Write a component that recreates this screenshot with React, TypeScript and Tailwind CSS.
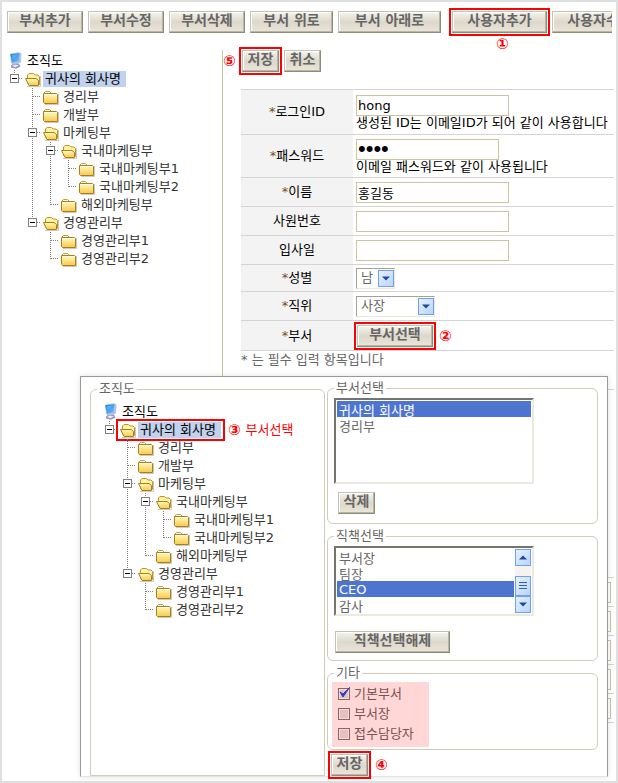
import { useState } from "react"
import type { ReactNode } from "react"
import clsx from "clsx"

type TreeRow = {
  label: string
  // which ancestor columns still carry a vertical line
  guides: boolean[]
  open?: boolean
  last?: boolean
}

const rows: TreeRow[] = [
  { label: "귀사의 회사명", guides: [], open: true, last: true },
  { label: "경리부", guides: [false] },
  { label: "개발부", guides: [false] },
  { label: "마케팅부", guides: [false], open: true },
  { label: "국내마케팅부", guides: [false, true], open: true },
  { label: "국내마케팅부1", guides: [false, true, true] },
  { label: "국내마케팅부2", guides: [false, true, true], last: true },
  { label: "해외마케팅부", guides: [false, true], last: true },
  { label: "경영관리부", guides: [false], open: true, last: true },
  { label: "경영관리부1", guides: [false, false] },
  { label: "경영관리부2", guides: [false, false], last: true },
]

function Defs() {
  return (
    <svg width="0" height="0" className="absolute" aria-hidden="true">
      <defs>
        <linearGradient id="folder" x1="0" y1="0" x2="0" y2="1">
          <stop offset="0" stopColor="#fffbc0" />
          <stop offset="1" stopColor="#f7c94c" />
        </linearGradient>
        <linearGradient id="screen" x1="0" y1="0" x2="1" y2="1">
          <stop offset="0" stopColor="#1f7fe0" />
          <stop offset="1" stopColor="#6cc4fb" />
        </linearGradient>
        <linearGradient id="arrowBox" x1="0" y1="0" x2="1" y2="1">
          <stop offset="0" stopColor="#e8f1ff" />
          <stop offset="1" stopColor="#b9d3fb" />
        </linearGradient>
      </defs>
    </svg>
  )
}

function Computer() {
  return (
    <svg width="18" height="18" viewBox="0 0 18 18" className="shrink-0" aria-hidden="true">
      <path d="M6 13.5 L9 11 L14 11.5 L15.5 14.5 L11 16.8 L6 15.5 Z" fill="#8f97bd" />
      <path d="M7 14 L10 12.5 L14 13.2 L10.5 15.3 Z" fill="#e9ebf5" />
      <path d="M5 1.8 L14 0.3 L16.5 1.5 L16 10.5 L8 12.5 L6 11 Z" fill="#b7c2e2" />
      <path d="M5.3 2.2 L14.4 0.9 L13.8 9.2 L7 10.8 Z" fill="url(#screen)" />
      <path d="M7 3.2 L13 2.4 L7.8 7.4 Z" fill="#5fb4f5" opacity="0.8" />
    </svg>
  )
}

function Folder({ open }: { open?: boolean }) {
  return (
    <svg width="18" height="18" viewBox="0 0 18 18" className="shrink-0" aria-hidden="true">
      <path d="M4 16.5 H17.5 V6" fill="none" stroke="#c9c9c9" />
      {open ? (
        <>
          <path d="M4.5 13 V5 L6 3.5 H10.5 L12 5 H15 L16.5 6.5 V14.5 H6 Z" fill="#fff3a6" stroke="#c0932a" />
          <path d="M2.5 8.5 H13 L15.5 10.5 V15.5 H6 Z" fill="url(#folder)" stroke="#b07d12" />
        </>
      ) : (
        <>
          <path d="M3 5 L4.5 3.5 H8.5 L10 5" fill="#fff" stroke="#c79b35" />
          <path d="M2.5 5.5 H15.5 L16.5 6.5 V15.5 H3.5 L2.5 14.5 Z" fill="url(#folder)" stroke="#b07d12" />
          <path d="M3.5 6.5 H15.5" stroke="#fffdf0" />
        </>
      )}
    </svg>
  )
}

function Guide({ line, branch, open, last }: { line?: boolean; branch?: boolean; open?: boolean; last?: boolean }) {
  return (
    <svg width="18" height="18" viewBox="0 0 18 18" className="shrink-0" aria-hidden="true">
      <g stroke="#808080" strokeDasharray="1 1" fill="none">
        {line && <path d="M9.5 0 V18" />}
        {branch && <path d={last ? "M9.5 0 V9" : "M9.5 0 V18"} />}
        {branch && <path d="M10 8.5 H18" />}
      </g>
      {open && (
        <>
          <rect x="5.5" y="4.5" width="8" height="8" fill="#fff" stroke="#808080" />
          <path d="M7 8.5 H12" stroke="#000" />
        </>
      )}
    </svg>
  )
}

function OrgTree({ framed }: { framed?: boolean }) {
  return (
    <ul className="text-[#333]">
      <li className="flex h-[18px] items-center gap-[4px] text-black">
        <Computer />
        <span>조직도</span>
      </li>
      {rows.map((row, i) => (
        <li key={row.label} className="flex h-[18px] items-center whitespace-nowrap">
          {row.guides.map((g, gi) => (
            <Guide key={gi} line={g} />
          ))}
          <Guide branch open={row.open} last={row.last} />
          <span
            className={clsx(
              "flex h-[18px] items-center gap-[2px]",
              framed && i === 0 && "pr-[2px] outline-2 outline-[#f00]"
            )}
          >
            <Folder open={row.open} />
            <a
              href="#"
              className={clsx("pl-[2px] leading-4", i === 0 && "bg-[#c1d2ee] pr-[5px] text-black")}
            >
              {row.label}
            </a>
          </span>
          {framed && i === 0 && (
            <span className="ml-[5px] flex items-center gap-[5px] text-[#f00]">
              <Step>③</Step>
              부서선택
            </span>
          )}
        </li>
      ))}
    </ul>
  )
}

function Step({ children, className }: { children: ReactNode; className?: string }) {
  return <span className={clsx("text-[15px] leading-5 font-bold text-[#f00]", className)}>{children}</span>
}

function Button({ children, className, marked }: { children: ReactNode; className: string; marked?: boolean }) {
  return (
    <button
      type="button"
      className={clsx(
        "flex h-[22px] shrink-0 items-center justify-center border border-t-[#c4c2b4] border-r-[#8f8b7b] border-b-[#8f8b7b] border-l-[#c4c2b4] bg-linear-to-b from-[#f6f3ec] via-[#ddd8cb] to-[#ebe5da] pb-[4px] text-[14px] leading-4 font-bold whitespace-nowrap text-[#666] shadow-[inset_-1px_-1px_0_#bab5a5,inset_1px_1px_0_#fff]",
        marked && "outline-2 outline-offset-1 outline-[#f00]",
        className
      )}
    >
      {children}
    </button>
  )
}

function ArrowBox({ dir = "down", className }: { dir?: "up" | "down"; className?: string }) {
  return (
    <svg width="16" height="17" viewBox="0 0 16 17" className={className} aria-hidden="true">
      <rect x="0.5" y="0.5" width="15" height="16" fill="url(#arrowBox)" stroke="#6ba3f0" />
      <path d={dir === "down" ? "M4 6.5 H12 L8 10.5 Z" : "M4 10.5 H12 L8 6.5 Z"} fill="#1c4b9b" />
    </svg>
  )
}

function Dropdown({ id, value, className }: { id: string; value: string; className: string }) {
  return (
    <span className={clsx("relative block", className)}>
      <select
        id={id}
        className="block h-[21px] w-full appearance-none border border-t-[#a5a294] border-r-[#ece9d8] border-b-[#ece9d8] border-l-[#a5a294] bg-white pl-[4px] leading-4 text-[#666]"
      >
        <option>{value}</option>
      </select>
      <ArrowBox className="pointer-events-none absolute top-[2px] right-[1px]" />
    </span>
  )
}

function Field({ id, label, required, height, children }: { id: string; label: string; required?: boolean; height: string; children: ReactNode }) {
  return (
    <tr className={clsx("border-y border-[#d4d4d4]", height)}>
      <th scope="row" className="w-[112px] bg-[#f3f3f3] font-normal">
        <label htmlFor={id}>
          {required && <span className="text-[#7a4a20]">*</span>}
          {label}
        </label>
      </th>
      <td className="pl-[3px] leading-[14px]">{children}</td>
    </tr>
  )
}

const inputBox = "block h-[21px] border border-[#cdc5a0] bg-white px-[1px] leading-4 text-black"

function UserForm() {
  return (
    <form className="min-w-0 flex-1 pr-[2px] pl-[18px]">
      <div className="relative flex gap-[5px] pl-[1px]">
        <Step className="absolute top-[1px] -left-[18px]">⑤</Step>
        <Button className="w-[37px]" marked>저장</Button>
        <Button className="w-[37px]">취소</Button>
      </div>
      <table className="mt-[17px] w-full border-collapse">
        <tbody>
          <Field id="loginId" label="로그인ID" required height="h-[45px]">
            <input id="loginId" type="text" defaultValue="hong" className={clsx(inputBox, "w-[153px]")} />
            <p className="whitespace-nowrap">생성된 ID는 이메일ID가 되어 같이 사용합니다</p>
          </Field>
          <Field id="pw" label="패스워드" required height="h-[43px]">
            <input
              id="pw"
              type="password"
              defaultValue="hong"
              className={clsx(inputBox, "w-[143px] font-['Liberation_Sans',sans-serif] text-[22px]")}
            />
            <p className="whitespace-nowrap">이메일 패스워드와 같이 사용됩니다</p>
          </Field>
          <Field id="name" label="이름" required height="h-[29px]">
            <input id="name" type="text" defaultValue="홍길동" className={clsx(inputBox, "w-[153px]")} />
          </Field>
          <Field id="empNo" label="사원번호" height="h-[29px]">
            <input id="empNo" type="text" className={clsx(inputBox, "w-[153px]")} />
          </Field>
          <Field id="joined" label="입사일" height="h-[29px]">
            <input id="joined" type="text" className={clsx(inputBox, "w-[153px]")} />
          </Field>
          <Field id="gender" label="성별" required height="h-[27px]">
            <Dropdown id="gender" value="남" className="w-[39px]" />
          </Field>
          <Field id="rank" label="직위" required height="h-[29px]">
            <Dropdown id="rank" value="사장" className="w-[79px]" />
          </Field>
          <Field id="dept" label="부서" required height="h-[30px]">
            <div className="flex items-center gap-[6px] pl-[1px]">
              <Button className="w-[76px]" marked>부서선택</Button>
              <Step>②</Step>
            </div>
          </Field>
        </tbody>
      </table>
      <p className="leading-[18px] text-[#666]">* 는 필수 입력 항목입니다</p>

      {/* rest of the form, running on underneath the dialog */}
      <div className="mt-[20px] border-t border-[#d4d4d4] pt-[187px]" aria-hidden="true">
        {[0, 1, 2, 3, 4].map((n) => (
          <div key={n} className="flex h-[29px] items-center justify-end border-t border-[#d4d4d4] pr-[3px]">
            <input type="text" tabIndex={-1} className={clsx(inputBox, "w-[153px]")} />
          </div>
        ))}
        <div className="border-t border-[#d4d4d4]" />
      </div>
    </form>
  )
}

function Group({ title, className, children }: { title: string; className?: string; children: ReactNode }) {
  return (
    <fieldset className={clsx("min-w-0 rounded-[6px] border border-[#cfcdb8]", className)}>
      <legend className="ml-[6px] px-[2px] leading-[18px] text-[#666]">{title}</legend>
      {children}
    </fieldset>
  )
}

const listBox =
  "block w-full overflow-hidden border-2 border-t-[#77756a] border-r-[#ece9e0] border-b-[#ece9e0] border-l-[#77756a] bg-white p-[1px] text-[#666] [scrollbar-width:none]"
const listOption =
  "flex h-4 min-h-0 items-center px-[2px] py-0 leading-4 text-[#666] checked:bg-[linear-gradient(#4d75cf,#4d75cf)] checked:text-white"

function CheckRow({ label, initial = false }: { label: string; initial?: boolean }) {
  const [on, setOn] = useState(initial)
  return (
    <label className="flex h-5 items-center gap-[4px] text-[#7d5050]">
      <span className="relative block size-[12px]">
        <input
          type="checkbox"
          checked={on}
          onChange={(e) => setOn(e.target.checked)}
          className="block size-[12px] appearance-none border border-[#8a6464] bg-[#e6c0c0] shadow-[inset_0_0_0_1px_#f8dcdc]"
        />
        {on && (
          <svg width="14" height="14" viewBox="0 0 14 14" className="pointer-events-none absolute -top-[2px] left-0" aria-hidden="true">
            <path d="M2 6 L5 11 L11.5 1.5 L5 8 Z" fill="#2a3fc0" stroke="#2a3fc0" />
          </svg>
        )}
      </span>
      {label}
    </label>
  )
}

function DeptDialog() {
  return (
    <div
      role="dialog"
      aria-label="부서선택"
      className="relative mt-[374px] mr-[8px] mb-[4px] ml-[78px] flex gap-[2px] self-start border border-[#999] border-b-[#e4e4e4] bg-white pt-[3px] pr-[9px] pl-[9px] shadow-[0_0_6px_rgba(0,0,0,0.12)] [grid-area:1/1]"
    >
      <Group title="조직도" className="w-[235px] shrink-0 rounded-b-none">
        <div className="pt-[5px] pl-[9px]">
          <OrgTree framed />
        </div>
      </Group>
      <div className="min-w-0 flex-1">
        <Group title="부서선택" className="-mt-px">
          <div className="pt-[1px] pb-[9px] pl-[6px]">
            <div className="w-[200px]">
              <select size={5} aria-label="부서선택" defaultValue="귀사의 회사명" className={clsx(listBox, "h-[86px]")}>
                <option className={listOption}>귀사의 회사명</option>
                <option className={listOption}>경리부</option>
              </select>
            </div>
            <Button className="mt-[8px] ml-[4px] w-[37px]">삭제</Button>
          </div>
        </Group>
        <Group title="직책선택" className="mt-[3px]">
          <div className="pt-[1px] pb-[7px] pl-[6px]">
            <div className="relative w-[200px]">
              <select size={4} aria-label="직책선택" defaultValue="CEO" className={clsx(listBox, "h-[70px] pr-[18px]")}>
                <option className={listOption}>부서장</option>
                <option className={listOption}>팀장</option>
                <option className={listOption}>CEO</option>
                <option className={listOption}>감사</option>
              </select>
              <div className="pointer-events-none absolute inset-y-[3px] right-[3px] flex flex-col justify-between bg-[#f5f3ee]">
                <ArrowBox dir="up" />
                <div>
                  <svg width="16" height="20" viewBox="0 0 16 20" className="block" aria-hidden="true">
                    <rect x="0.5" y="0.5" width="15" height="19" fill="url(#arrowBox)" stroke="#6ba3f0" />
                    <path d="M4 6.5 H12 M4 9.5 H12 M4 12.5 H12" stroke="#2f62b5" />
                  </svg>
                  <ArrowBox className="block" />
                </div>
              </div>
            </div>
            <Button className="mt-[15px] ml-[1px] w-[115px]">직책선택해제</Button>
          </div>
        </Group>
        <Group title="기타" className="mt-[3px]">
          <div className="mb-[2px] ml-[4px] w-[97px] bg-[#ffd7d7] pt-[2px] pb-[3px] pl-[6px]">
            <CheckRow label="기본부서" initial />
            <CheckRow label="부서장" />
            <CheckRow label="접수담당자" />
          </div>
        </Group>
        <div className="mt-[4px] flex items-center gap-[7px] pl-[4px]">
          <Button className="w-[37px]" marked>저장</Button>
          <Step>④</Step>
        </div>
      </div>
    </div>
  )
}

export default function App() {
  return (
    <div className="grid min-h-screen grid-cols-[minmax(0,1fr)] border-2 border-[#e0e0e0] bg-white font-['DejaVu_Sans','Noto_Sans_CJK_KR',sans-serif] text-[13px] leading-4 text-black">
      <Defs />
      <div className="flex min-w-0 flex-col pb-[5px] [grid-area:1/1]">
        <nav className="mr-[4px] flex gap-[5px] overflow-x-clip pt-[9px] pl-[5px]">
          <Button className="w-[76px]">부서추가</Button>
          <Button className="w-[76px]">부서수정</Button>
          <Button className="w-[76px]">부서삭제</Button>
          <Button className="w-[83px]">부서 위로</Button>
          <Button className="w-[103px]">부서 아래로</Button>
          <div className="relative ml-[6px]">
            <Button className="w-[95px]" marked>사용자추가</Button>
            <Step className="absolute top-[23px] left-[44px]">①</Step>
          </div>
          <Button className="w-[95px]">사용자수정</Button>
        </nav>
        <div className="mt-[17px] flex flex-1">
          <aside className="w-[221px] shrink-0 border-r border-[#c8c6a0] pt-[2px] pl-[3px]">
            <OrgTree />
          </aside>
          <UserForm />
        </div>
      </div>
      <DeptDialog />
    </div>
  )
}
